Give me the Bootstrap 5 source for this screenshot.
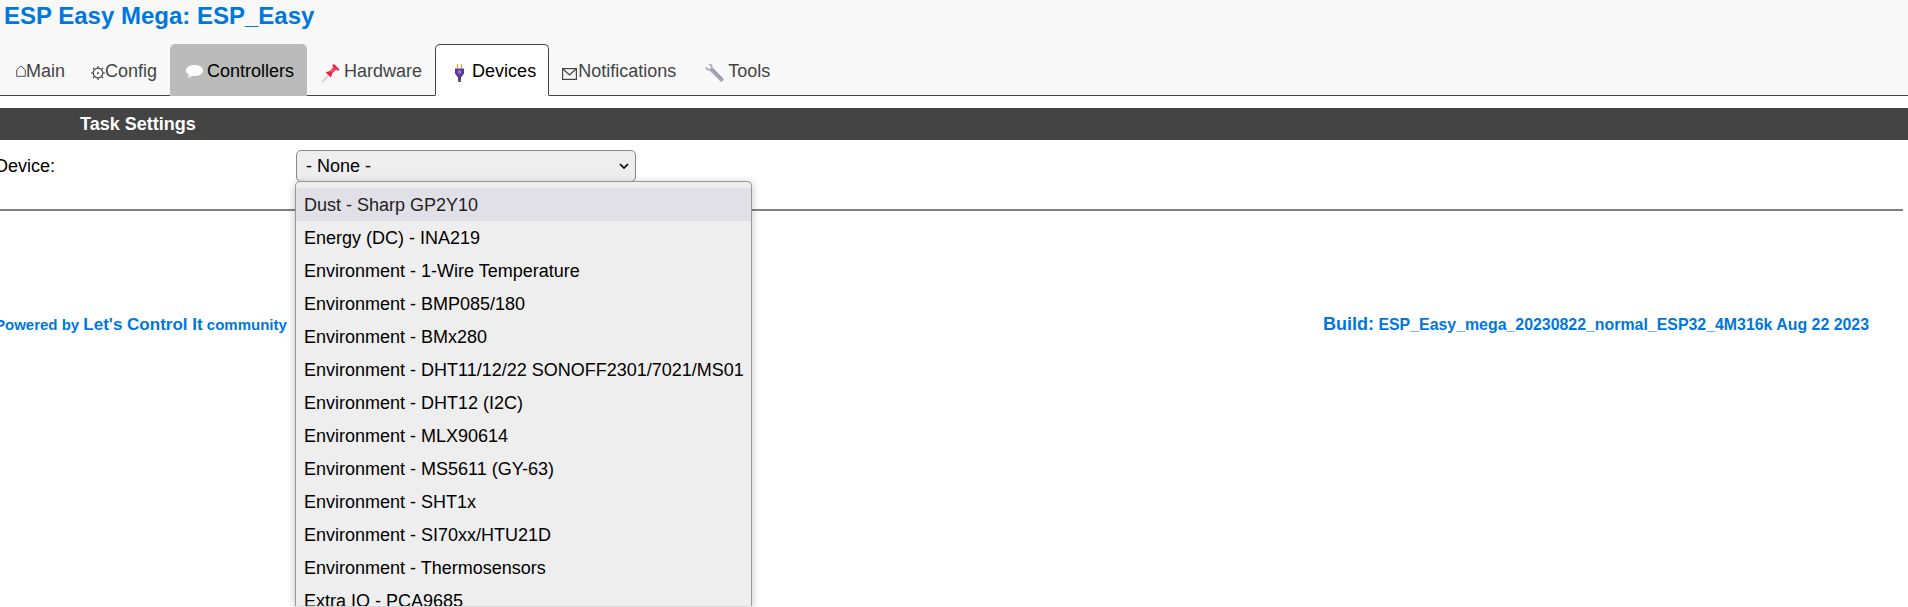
<!DOCTYPE html>
<html lang="en">
<head>
  <meta charset="UTF-8">
  <meta name="viewport" content="width=device-width, initial-scale=1.0">
  <title>ESP Easy Mega: ESP_Easy</title>

  <!-- Bootstrap CSS -->
  <link href="https://cdn.jsdelivr.net/npm/bootstrap@5.3.2/dist/css/bootstrap.min.css" rel="stylesheet">

  <style>
    html, body {
      height: 607px;
      overflow: hidden;
    }

    body {
      font-family: "Liberation Sans", Arial, sans-serif;
      font-size: 18px;
      color: #000;
      background: #fff;
    }

    .page-head {
      height: 96px;
      background: #f8f8f8;
      border-bottom: 1px solid #444;
    }

    .page-title {
      margin: 0;
      padding: 2px 0 0 4px;
      height: 44px;
      font-size: 24px;
      line-height: 28px;
      font-weight: 700;
      color: #07d;
    }

    .tab-row {
      padding-left: 3px;
    }

    .tab-link {
      display: flex;
      align-items: flex-start;
      height: 52px;
      padding: 14px 12px 0;
      color: #444;
      line-height: 24px;
      text-decoration: none;
      white-space: nowrap;
      border: 1px solid transparent;
      border-radius: 5px 5px 0 0;
    }

    .tab-link svg {
      flex: none;
      display: block;
    }

    .tab-on {
      background: #bbb;
      color: #000;
    }

    .tab-current {
      background: #fff;
      color: #000;
      border-color: #444;
      border-bottom-color: #fff;
    }

    .section-bar {
      height: 32px;
      margin-top: 12px;
      padding-left: 80px;
      background: #444;
      color: #fff;
      font-weight: 700;
      line-height: 32px;
    }

    .form-line {
      position: relative;
      height: 32px;
      margin-top: 10px;
      margin-left: -5px;
    }

    .form-label-col {
      width: 301px;
      line-height: 32px;
    }

    .device-select {
      width: 340px;
      height: 32px;
      padding: 0 6px 0 9px;
      font-size: 18px;
      line-height: 30px;
      background: #eee;
      border: 1px solid #888;
      border-radius: 5px;
    }

    .device-select svg {
      display: block;
    }

    .device-menu {
      position: absolute;
      top: 31px;
      left: 300px;
      width: 457px;
      height: 425px;
      padding: 6px 0 0;
      margin: 0;
      overflow: hidden;
      font-size: 18px;
      background: #eee;
      border: 1px solid #999;
      border-bottom: 0;
      border-radius: 5px 5px 0 0;
      box-shadow: 0 2px 8px rgba(0, 0, 0, .25);
    }

    .device-menu .dropdown-item {
      height: 33px;
      padding: 0 8px;
      line-height: 35px;
      color: #000;
    }

    .device-menu .dropdown-item.item-hover {
      background: #e0e0e6;
      color: #222;
    }

    .form-rule {
      height: 2px;
      margin: 27px 5px 0 0;
      background: #808080;
      opacity: 1;
      border: 0;
    }

    .page-foot {
      margin-top: 103px;
      margin-left: -5px;
      padding-right: 39px;
      color: #07d;
      font-weight: 700;
      line-height: 20px;
    }

    .foot-left {
      font-size: 15px;
    }

    .foot-left span {
      font-size: 17px;
    }

    .foot-right {
      font-size: 15.9px;
    }

    .foot-right span {
      font-size: 18px;
    }
  </style>
</head>
<body>
  <!-- Header -->
  <header class="page-head">
    <h1 class="page-title">ESP Easy Mega: ESP_Easy</h1>
    <nav class="tab-row d-flex">
      <a class="tab-link" href="#">
        <svg width="10" height="24" viewBox="0 -6 10 24"><path d="M.7 11.300V5L5 .9 9.300 5v6.300z" fill="none" stroke="#555" stroke-width="1"/></svg>Main
      </a>
      <a class="tab-link" href="#">
        <svg width="14" height="24" viewBox="0 -7 14 24"><circle cx="7" cy="7" r="4.800" fill="none" stroke="#444" stroke-width="1.200"/><circle cx="7" cy="7" r="1" fill="#444"/><path d="M7 0v2M7 12v2M0 7h2M12 7h2M2 2l1.400 1.400M10.600 10.600 12 12M2 12l1.400-1.400M10.600 3.400 12 2" stroke="#444" stroke-width="1.200"/></svg>Config
      </a>
      <a class="tab-link tab-on" href="#">
        <svg width="24" height="24" viewBox="-2 -5 24 24"><path d="M9.500 1C14.500 1 18 3.200 18 6.500S14.500 12 9.500 12c-1 0-1.900-.1-2.800-.3C5.700 13 4.500 13.800 2.800 14c.6-.8 1-1.900 1-3.400C2 9.600 1 8.100 1 6.500 1 3.200 4.500 1 9.500 1z" fill="#fff"/><path d="M2.800 14c.6-.8 1-1.900 1-3.400l1.500.8C5 12.500 4 13.600 2.800 14z" fill="#cfe3f3"/></svg>Controllers
      </a>
      <a class="tab-link" href="#">
        <svg width="24" height="24" viewBox="-1 -4 24 24"><path d="M1 19l6-6" stroke="#ccc" stroke-width="1.600"/><path d="M4.500 9.500 9 8l3.500-4L11 2.500 13 1l5.500 5.500L17 8l-1.500-1.500L11.500 10 10 14.500z" fill="#ee2244"/><path d="M9 8l3.500-4 2 2L11 9.500z" fill="#f9526a"/></svg>Hardware
      </a>
      <a class="tab-link tab-current" href="#">
        <svg width="24" height="24" viewBox="-6 -5 24 24"><path d="M3.500 0v4.500M7.500 0v4.500" stroke="#d9a441" stroke-width="1.300"/><path d="M1 4.500h9v5L7.500 13h-4L1 9.500z" fill="#5b3a93"/><path d="M4 6.500h3v3H4z" fill="#9a80c8"/><path d="M4 13h3l-.3 5H4.300z" fill="#3f3a6b"/></svg>Devices
      </a>
      <a class="tab-link" href="#">
        <svg width="16" height="24" viewBox="0 -9 16 24"><rect x=".6" y=".6" width="13.800" height="10.800" fill="none" stroke="#444" stroke-width="1.200"/><path d="M1 1l6.500 6L14 1" fill="none" stroke="#444" stroke-width="1.200"/></svg>Notifications
      </a>
      <a class="tab-link" href="#">
        <svg width="26" height="24" viewBox="-3 -4 26 24"><path d="M1 3.500 3.500 6l2-.5.500-2L3.500 1C5.500 0 8 1.500 7.500 4.500L18.500 15.500c1 1.500-1.500 4-3 3L4.500 7.500C1.500 8 0 5.500 1 3.500z" fill="#aaa6bb"/><path d="M7.500 6 17 16" stroke="#8d88a3" stroke-width="1"/></svg>Tools
      </a>
    </nav>
  </header>

  <main>
    <div class="section-bar">Task Settings</div>

    <div class="form-line d-flex">
      <div class="form-label-col">Device:</div>
      <div class="device-select d-flex align-items-center justify-content-between">
        <span>- None -</span>
        <svg width="10" height="7" viewBox="0 0 10 7"><path d="M1 1l4 4 4-4" fill="none" stroke="#000" stroke-width="1.700"/></svg>
      </div>
      <ul class="device-menu dropdown-menu show list-unstyled">
        <li><a class="dropdown-item item-hover" href="#">Dust - Sharp GP2Y10</a></li>
        <li><a class="dropdown-item" href="#">Energy (DC) - INA219</a></li>
        <li><a class="dropdown-item" href="#">Environment - 1-Wire Temperature</a></li>
        <li><a class="dropdown-item" href="#">Environment - BMP085/180</a></li>
        <li><a class="dropdown-item" href="#">Environment - BMx280</a></li>
        <li><a class="dropdown-item" href="#">Environment - DHT11/12/22 SONOFF2301/7021/MS01</a></li>
        <li><a class="dropdown-item" href="#">Environment - DHT12 (I2C)</a></li>
        <li><a class="dropdown-item" href="#">Environment - MLX90614</a></li>
        <li><a class="dropdown-item" href="#">Environment - MS5611 (GY-63)</a></li>
        <li><a class="dropdown-item" href="#">Environment - SHT1x</a></li>
        <li><a class="dropdown-item" href="#">Environment - SI70xx/HTU21D</a></li>
        <li><a class="dropdown-item" href="#">Environment - Thermosensors</a></li>
        <li><a class="dropdown-item" href="#">Extra IO - PCA9685</a></li>
      </ul>
    </div>

    <hr class="form-rule">

    <footer class="page-foot d-flex justify-content-between align-items-center">
      <div class="foot-left">Powered by <span>Let's Control It</span> community</div>
      <div class="foot-right"><span>Build:</span> ESP_Easy_mega_20230822_normal_ESP32_4M316k Aug 22 2023</div>
    </footer>
  </main>

  <!-- Bootstrap JS -->
  <script src="https://cdn.jsdelivr.net/npm/bootstrap@5.3.2/dist/js/bootstrap.bundle.min.js"></script>
</body>
</html>
